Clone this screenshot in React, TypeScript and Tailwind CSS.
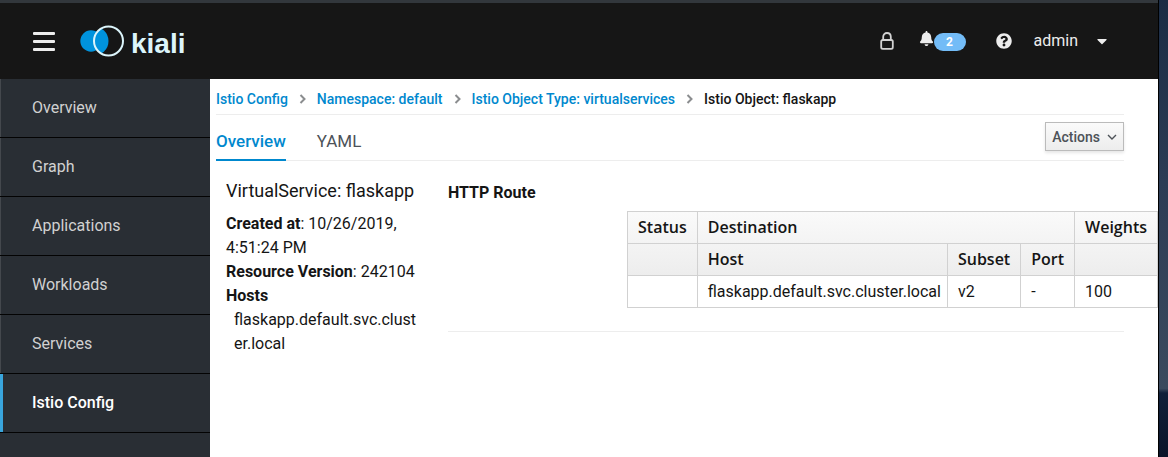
import React from "react";
import { FaBell, FaCaretDown, FaQuestionCircle } from "react-icons/fa";

const navItems = ["Overview", "Graph", "Applications", "Workloads", "Services", "Istio Config"];
const crumbs = ["Istio Config", "Namespace: default", "Istio Object Type: virtualservices"];

function Logo() {
  return (
    <span className="ml-[25px] flex items-center gap-[6px] text-[#dcf5fb]">
      <svg width="45" height="32" viewBox="0 0 45 32" aria-hidden="true">
        <defs>
          <clipPath id="ring">
            <circle cx="28.5" cy="16" r="14.5" />
          </clipPath>
        </defs>
        <circle cx="11" cy="16" r="10.7" fill="#0093dd" />
        <circle cx="14" cy="16" r="14.5" fill="#0093dd" clipPath="url(#ring)" />
        <circle cx="28.5" cy="16" r="14.5" fill="none" stroke="#dcf5fb" strokeWidth="2" />
      </svg>
      <span className="mt-[6px] font-['Liberation_Sans',sans-serif] text-[28px] leading-8 font-bold">kiali</span>
    </span>
  );
}

function Chevron() {
  return (
    <svg width="8" height="10" viewBox="0 0 8 10" fill="none" stroke="#8b8d8f" strokeWidth="2" aria-hidden="true">
      <path d="M1.5 1l4 4-4 4" />
    </svg>
  );
}

function Masthead() {
  return (
    <header className="flex h-[79px] shrink-0 items-center border-t-[3px] border-[#32373c] bg-[#161616] pl-[33px] pr-12 text-[#ededed]">
      <button type="button" aria-label="Toggle navigation" className="flex w-[22px] flex-col gap-[5px]">
        <span className="h-[3px] w-full rounded-[1px] bg-[#ededed]" />
        <span className="h-[3px] w-full rounded-[1px] bg-[#ededed]" />
        <span className="h-[3px] w-full rounded-[1px] bg-[#ededed]" />
      </button>
      <Logo />
      <div className="ml-auto flex items-center">
        <svg width="14" height="18" viewBox="0 0 14 18" fill="none" stroke="#d2d2d2" strokeWidth="1.8" aria-hidden="true">
          <rect x="1.2" y="8" width="11.6" height="8.8" rx="1.6" />
          <path d="M3.2 8V4.8C3.2 2.6 4.8 1 7 1s3.8 1.6 3.8 3.8V8" />
        </svg>
        <button type="button" aria-label="Notifications" className="ml-[25px] flex items-start">
          <FaBell size={15} />
          <span className="mt-[2px] w-8 rounded-full bg-[#73bcf7] text-center text-xs leading-[18px] font-bold text-white">2</span>
        </button>
        <button type="button" aria-label="Help" className="ml-[30px]">
          <FaQuestionCircle size={16} />
        </button>
        <button type="button" className="ml-[22px] flex items-center gap-4 text-base">
          admin
          <FaCaretDown size={16} />
        </button>
      </div>
    </header>
  );
}

function Sidebar() {
  return (
    <nav className="w-[210px] shrink-0 bg-[#292e34]">
      <ul>
        {navItems.map((item) => {
          const active = item === "Istio Config";
          return (
            <li key={item} className="border-b border-[#030303]">
              <a
                href="#"
                className={
                  active
                    ? "block border-l-[3px] border-[#39a5dc] py-[17px] pl-[29px] text-base leading-6 font-medium text-white"
                    : "block border-l border-[#44484d] py-[17px] pl-[31px] text-base leading-6 text-[#d1d1d1]"
                }
              >
                {item}
              </a>
            </li>
          );
        })}
      </ul>
    </nav>
  );
}

function RouteTable() {
  const head = "border border-[#d1d1d1] px-[10px] py-1 text-left font-semibold leading-[23px]";
  const cell = "border border-[#d1d1d1] py-1 pl-[10px] pr-[6px] leading-[23px]";
  return (
    <table className="border-collapse text-base whitespace-nowrap">
      <thead className="bg-linear-to-b from-[#fafafa] to-[#ededed] font-['Open_Sans',sans-serif]">
        <tr>
          <th className={head}>Status</th>
          <th className={head} colSpan={3}>Destination</th>
          <th className={head}>Weights</th>
        </tr>
        <tr>
          <th className={head} />
          <th className={head}>Host</th>
          <th className={head}>Subset</th>
          <th className={head}>Port</th>
          <th className={head} />
        </tr>
      </thead>
      <tbody>
        <tr>
          <td className={cell} />
          <td className={cell}>flaskapp.default.svc.cluster.local</td>
          <td className={cell}>v2</td>
          <td className={cell}>-</td>
          <td className={cell}>100</td>
        </tr>
      </tbody>
    </table>
  );
}

function Content() {
  return (
    <main className="min-w-0 flex-1 bg-white pl-[6px] pr-[34px] text-[#151515]">
      <nav aria-label="Breadcrumb" className="border-b border-[#ededed] pt-[10px] pb-[5px]">
        <ol className="flex items-center text-sm leading-5 font-medium">
          {crumbs.map((crumb) => (
            <li key={crumb} className="flex items-center">
              <a href="#" className="text-[#0088ce]">{crumb}</a>
              <span className="ml-[11px] mr-[10px]"><Chevron /></span>
            </li>
          ))}
          <li>Istio Object: flaskapp</li>
        </ol>
      </nav>
      <div className="flex items-start justify-between border-b border-[#ededed]">
        <div role="tablist" className="-mb-px flex gap-[31px] text-[17px] leading-6">
          <button type="button" role="tab" aria-selected="true" className="border-b-2 border-[#0088ce] pt-[14px] pb-[6px] font-medium text-[#0088ce]">
            Overview
          </button>
          <button type="button" role="tab" aria-selected="false" className="border-b-2 border-transparent pt-[14px] pb-[6px] text-[#4d5258]">
            YAML
          </button>
        </div>
        <button type="button" className="mt-[7px] flex h-[29px] items-center gap-[7px] border border-[#bbb] bg-linear-to-b from-[#fafafa] to-[#ededed] px-[6px] text-sm font-medium text-[#4d5258] shadow-[0_2px_3px_rgba(3,3,3,0.1)]">
          Actions
          <svg width="10" height="6" viewBox="0 0 10 6" fill="none" stroke="#4d5258" strokeWidth="1.4" aria-hidden="true">
            <path d="M1 1l4 4 4-4" />
          </svg>
        </button>
      </div>
      <div className="flex items-start pt-[18px]">
        <section className="w-[232px] shrink-0 pl-[10px] pr-7">
          <h1 className="text-lg leading-6 whitespace-nowrap">VirtualService: flaskapp</h1>
          <div className="mt-[9px] text-base leading-6">
            <p><strong>Created at</strong>: 10/26/2019, 4:51:24 PM</p>
            <p><strong>Resource Version</strong>: 242104</p>
            <p className="font-bold">Hosts</p>
            <p className="pl-2 break-all">flaskapp.default.svc.cluster.local</p>
          </div>
        </section>
        <section className="min-w-0 flex-1 border-b border-[#ededed] pb-[23px]">
          <h2 className="pt-[2px] text-base leading-6 font-bold">HTTP Route</h2>
          <div className="-mr-[34px] mt-[6px] flex justify-end">
            <RouteTable />
          </div>
        </section>
      </div>
    </main>
  );
}

export default function App() {
  return (
    <div className="flex h-screen overflow-hidden font-['Roboto',sans-serif]">
      <div className="flex min-w-0 flex-1 flex-col">
        <Masthead />
        <div className="flex min-h-0 flex-1">
          <Sidebar />
          <Content />
        </div>
      </div>
      <div className="w-[10px] shrink-0 border-l border-black bg-[linear-gradient(to_bottom,#1b2c44,#2c3c55_40%,#3b4a5e_85%,#10203a_86%,#0b1429)]" />
    </div>
  );
}
